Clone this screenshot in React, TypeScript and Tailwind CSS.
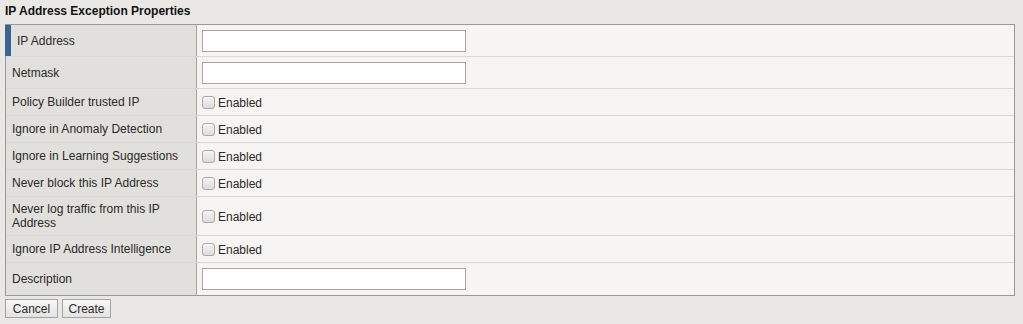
import React from "react";

type Row = {
  label: string;
  kind: "text" | "check";
  h: string;
  active?: boolean;
};

const rows: Row[] = [
  { label: "IP Address", kind: "text", h: "h-[32px]", active: true },
  { label: "Netmask", kind: "text", h: "h-[32px]" },
  { label: "Policy Builder trusted IP", kind: "check", h: "h-[27px]" },
  { label: "Ignore in Anomaly Detection", kind: "check", h: "h-[27px]" },
  { label: "Ignore in Learning Suggestions", kind: "check", h: "h-[27px]" },
  { label: "Never block this IP Address", kind: "check", h: "h-[27px]" },
  { label: "Never log traffic from this IP Address", kind: "check", h: "h-[39px]" },
  { label: "Ignore IP Address Intelligence", kind: "check", h: "h-[27px]" },
  { label: "Description", kind: "text", h: "h-[32px]" },
];

function Checkbox() {
  return (
    <span className="inline-block w-[13px] h-[13px] rounded-[3px] border border-[#a9a9a9] bg-gradient-to-b from-[#f4f4f4] to-[#dcdcdc] shadow-[inset_0_1px_1px_rgba(255,255,255,0.8)]" />
  );
}

function PropRow({ row, last }: { row: Row; last: boolean }) {
  return (
    <div className={`flex ${row.h} ${last ? "" : "border-b border-[#dad9d5]"}`}>
      <div className="flex w-[191px] shrink-0 border-r border-[#a3a3a3] bg-[#e1e0dc]">
        {row.active && <div className="-ml-px w-[6px] shrink-0 bg-[#3b6590]" />}
        <div className="flex items-center pl-[6px] pr-2 leading-[14px]">{row.label}</div>
      </div>
      <div className="flex flex-1 items-center bg-[#f6f5f3] pl-[5px]">
        {row.kind === "text" ? (
          <input
            type="text"
            className="h-[22px] w-[264px] border border-[#a6a6a6] bg-white outline-none"
          />
        ) : (
          <label className="flex items-center gap-[3px]">
            <Checkbox />
            <span className="mt-[2px] leading-[14px]">Enabled</span>
          </label>
        )}
      </div>
    </div>
  );
}

export default function App() {
  return (
    <div className="min-h-[324px] w-[1023px] bg-[#e9e8e4] pl-[5px] text-[12px] text-[#2c2929] [font-family:Arial,'Liberation_Sans',sans-serif]">
      <div className="h-[24px] pt-[4px] font-bold leading-[14px] text-[#111]">
        IP Address Exception Properties
      </div>
      <div className="w-[1010px] border border-[#9a9a9a]">
        {rows.map((row, i) => (
          <PropRow key={row.label} row={row} last={i === rows.length - 1} />
        ))}
      </div>
      <div className="mt-[3px] flex gap-[4px]">
        <button className="h-[19px] w-[53px] border border-[#a3a3a3] bg-gradient-to-b from-[#f8f8f8] to-[#e3e3e3] leading-[14px]">
          Cancel
        </button>
        <button className="h-[19px] w-[49px] border border-[#a3a3a3] bg-gradient-to-b from-[#f8f8f8] to-[#e3e3e3] leading-[14px]">
          Create
        </button>
      </div>
    </div>
  );
}
